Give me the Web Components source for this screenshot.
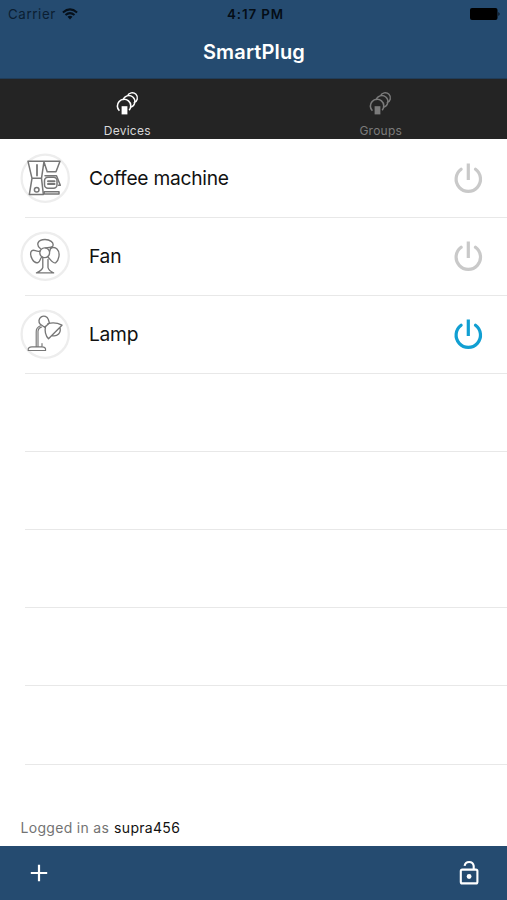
<!DOCTYPE html>
<html lang="en"><head><meta charset="utf-8"><title>SmartPlug</title>
<style>html,body{margin:0;height:100%;background:#fff;font-family:Inter,"Liberation Sans",sans-serif}</style></head>
<body><smart-app></smart-app>
<script>
const define=(name,html)=>customElements.define(name,class extends HTMLElement{
  constructor(){super();this.attachShadow({mode:'open'}).innerHTML=html}
});
define('app-header',`<style>
:host{display:block;height:78px;background:#254b70;border-bottom:1px solid #203c58;color:#fff}
.status{display:grid;grid-template-columns:1fr auto 1fr;height:27px;align-items:center;color:#06101a;font-size:13.3px}
.left{display:flex;align-items:center;gap:6px;padding-left:8px;letter-spacing:.62px;color:#0b1e32}
.time{font-weight:600;letter-spacing:.9px;margin-left:4px;color:#040d16}
.bat{justify-self:end;margin-right:6px}svg{display:block}
h1{margin:0;height:51px;line-height:51px;text-align:center;font-size:20px;font-weight:600;letter-spacing:.14px;text-indent:1px}
</style><div class="status"><div class="left"><span>Carrier</span><svg width="16" height="12" viewBox="0 0 16 12" fill="none" stroke="#06101a" stroke-width="2"><path d="M.9 4.4Q8-1.6 15.1 4.4M3.5 7.1Q8 3.2 12.5 7.1"/><path d="M5.5 8.8Q8 6.9 10.5 8.8L8 11.6Z" fill="#06101a" stroke="none"/></svg></div><span class="time">4:17 PM</span>
<svg class="bat" width="31" height="12" viewBox="0 0 31 12"><rect width="27.5" height="12" rx="2" fill="#000"/><path d="M28.5 4q2 2 0 4z" fill="#000"/></svg></div><h1><slot></slot></h1>`);
define('tab-item',`<style>
:host{display:flex;flex-direction:column;align-items:center;flex:1;color:#7b7b7b;font-size:12px;letter-spacing:.25px;padding-left:1px}
:host([selected]){color:#fff}svg{display:block;margin-top:11px;margin-left:1px}span{line-height:16px;margin-top:8px}:host([selected]) span{color:#d8d8d8}
</style><svg width="24" height="25" viewBox="0 0 24 25" fill="none" stroke="currentColor" stroke-width="1.6"><path d="M3.4 20.8A6.7 6.7 0 1 1 13.2 20.3"/><path d="M7 10.2A6 6 0 1 1 15 17.2M11.3 6.2A5.2 5.2 0 1 1 17.7 12.9" stroke-width="1.4"/><path d="M5.6 16.2h5.8v8.2H5.6z" fill="currentColor" stroke="none"/></svg><span><slot></slot></span>`);
define('tab-strip',`<style>:host{display:flex;height:60px;background:#242424}</style><slot></slot>`);

const art={
coffee:'<g stroke-width="1.5"><path d="M8 8.3H24L21.5 25.3H12ZM24 8.3H40L36 18.7H27.2L24 9M12 25.3 9.3 41.6H23.4L21.5 25.3M25 22.8H36.5L40.3 32.2H38.5"/><rect x="24.5" y="24.3" width="12.5" height="11" rx="3.5"/><path d="M24.2 38.7H39v2.4H24.2Z"/><path d="M17 12v10.5" stroke-width="1.8"/><path d="M28 28.3H34.5M28 31H34.5" stroke-width="2"/><circle cx="16.7" cy="36.8" r="2.3"/></g>',
fan:'<circle cx="24.7" cy="21.7" r="4.9"/><path d="M20.3 17.6C15.8 13.8 17.5 8.5 25 8.5 30 8.6 33.8 11.5 33 14.4 32 17.2 27 16.3 25.5 16.8M29.7 20.4C30 16 34.5 15.5 37 18 41 22 38.5 29.5 35.7 31.8 33 33 31 29 27.5 25.5M20 20.1C16 21.5 13 16.7 11 20.8 9.5 25 13.7 33.1 18 31.5 20.5 30.5 19.8 27.2 22 26M22.8 26.3V36.5Q22 39.5 16.5 41.9H33.6Q28.5 39.5 28 36.5V28.5"/>',
lamp:'<path d="M8.2 41.5Q7.8 37.8 12 37.8H22Q26 37.8 25.6 41.5ZM16.2 37.8V23Q16 18.7 20.4 16.8M18 37.5V22Q18.5 18.8 21.7 18M22 34.5v3" stroke-width="1.15"/><path d="M20.3 15.3A4.8 4.8 0 1 1 28.3 10.4L29.4 13.9 24.7 18.3Z"/><path d="M28 14.7Q35 12.6 42 16.2L28.5 29.8Q24 25 25.5 17.4M39.9 18.5C41.5 23.5 37.5 28 32 26.6"/>'};
customElements.define('device-icon',class extends HTMLElement{
 connectedCallback(){this.attachShadow({mode:'open'}).innerHTML=`<style>:host{display:block;width:50px;height:50px}svg{display:block}</style><svg width="50" height="50" viewBox="0 0 50 50" fill="none" stroke="#777" stroke-width="1.35" stroke-linejoin="round" stroke-linecap="round"><circle cx="25.2" cy="25.2" r="23.6" stroke="#ededed" stroke-width="2.3"/>${art[this.getAttribute('kind')]}</svg>`}
});
define('power-button',`<style>:host{display:block;color:#c9c9c9}svg{display:block}</style><svg width="30" height="32" viewBox="0 0 30 32" fill="none" stroke="currentColor" stroke-width="3.2"><path d="M15.3 1.5v16.5"/><path d="M8.1 7.3A12.2 12.2 0 1 0 22.5 7.3" stroke-linecap="round"/></svg>`);
customElements.define('device-row',class extends HTMLElement{
 connectedCallback(){const kind=this.getAttribute('kind');this.attachShadow({mode:'open'}).innerHTML=`<style>
:host{display:block;height:78.15px;box-sizing:border-box;padding-left:25px}
.row{height:100%;box-sizing:border-box;border-bottom:1px solid #e8e8e8;display:flex;align-items:center;color:#111;font-size:19.2px}
device-icon{margin-left:-5px;margin-right:19px}.name{flex:1;line-height:24px;letter-spacing:-.25px}power-button{margin-right:24px}:host([on]) power-button{color:#119fd2}
</style><div class="row">${kind?`<device-icon kind="${kind}"></device-icon><span class="name"><slot></slot></span><power-button></power-button>`:''}</div>`}
});
define('account-line',`<style>:host{display:flex;height:37px;align-items:center;gap:5px;padding-left:20.5px;font-size:14px;color:#737373;letter-spacing:.3px}b{font-weight:400;color:#111}</style><span>Logged in as</span><b><slot></slot></b>`);
define('bottom-bar',`<style>:host{display:flex;justify-content:space-between;height:54px;box-sizing:border-box;padding:0 27px 0 30px;background:#254b70;align-items:center}svg{display:block}</style>
<svg width="18" height="18" viewBox="0 0 18 18" stroke="#fff" stroke-width="2.2"><path d="M9 .8v16.4M.8 9h16.4"/></svg>
<svg width="22" height="26" viewBox="0 0 22 26" fill="none" stroke="#fff" stroke-width="2.1"><rect x="2.8" y="9.6" width="16.6" height="13.8" rx="1.5"/><path d="M6.6 5.9A4.6 4.6 0 0 1 15.7 5.9V9.5"/><circle cx="11.1" cy="16.5" r="2.4" fill="#fff" stroke="none"/></svg>`);
define('smart-app',`<style>:host{display:flex;flex-direction:column;width:507px;height:900px;background:#fff;overflow:hidden}main{flex:1;min-height:0;padding-top:.4px}</style>
<app-header>SmartPlug</app-header><tab-strip><tab-item selected>Devices</tab-item><tab-item>Groups</tab-item></tab-strip>
<main><device-row kind="coffee">Coffee machine</device-row><device-row kind="fan">Fan</device-row><device-row kind="lamp" on>Lamp</device-row><device-row></device-row><device-row></device-row><device-row></device-row><device-row></device-row><device-row></device-row></main>
<account-line>supra456</account-line><bottom-bar></bottom-bar>`);
</script></body></html>
